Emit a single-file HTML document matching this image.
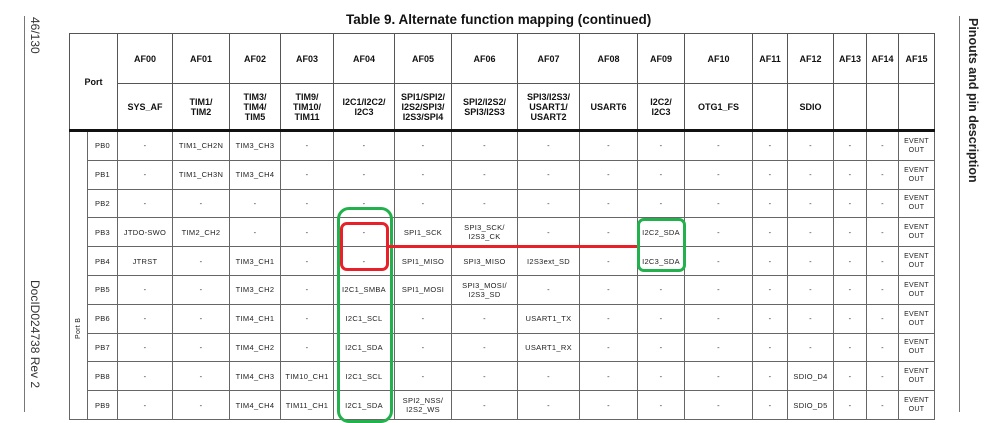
<!DOCTYPE html>
<html><head><meta charset="utf-8"><style>
body{margin:0;width:998px;height:412px;background:#fff;overflow:hidden;position:relative;font-family:"Liberation Sans",Arial,sans-serif;}
.a{position:absolute}
table{position:absolute;left:69px;top:33px;border-collapse:collapse;table-layout:fixed;}
td{border:1px solid #666;text-align:center;vertical-align:middle;padding:0;font-size:7.5px;color:#222;letter-spacing:0.3px;line-height:9px;overflow:hidden;white-space:nowrap}
th{border:1px solid #555;font-size:9px;font-weight:bold;color:#111;line-height:10px;padding:0;white-space:nowrap}
tr.h1 th{height:49px}
tr.h2 th{height:45px;border-bottom:3px solid #111}
tr.r td{height:27.8px}
.e{font-size:7px;line-height:9px}
</style></head><body>
<div class="a" style="left:24px;top:16px;width:1px;height:396px;background:#777"></div>
<div class="a" style="left:959px;top:16px;width:1px;height:396px;background:#777"></div>
<div class="a" style="left:42px;top:17px;transform-origin:0 0;transform:rotate(90deg);font-size:12px;color:#333;white-space:nowrap">46/130</div>
<div class="a" style="left:42px;top:280px;transform-origin:0 0;transform:rotate(90deg);font-size:12px;color:#333;white-space:nowrap">DocID024738 Rev 2</div>
<div class="a" style="left:980px;top:18px;transform-origin:0 0;transform:rotate(90deg);font-size:12.5px;font-weight:bold;color:#222;white-space:nowrap">Pinouts and pin description</div>
<div class="a" style="left:346px;top:12px;font-size:13.5px;font-weight:bold;color:#111;white-space:nowrap">Table 9. Alternate function mapping (continued)</div>
<table>
<colgroup><col style="width:18px"><col style="width:30px"><col style="width:55px"><col style="width:57px"><col style="width:51px"><col style="width:53px"><col style="width:61px"><col style="width:57px"><col style="width:66px"><col style="width:62px"><col style="width:58px"><col style="width:47px"><col style="width:68px"><col style="width:35px"><col style="width:46px"><col style="width:33px"><col style="width:32px"><col style="width:36px"></colgroup>
<tr class="h1"><th colspan="2" rowspan="2" style="border-bottom:3px solid #111">Port</th><th>AF00</th><th>AF01</th><th>AF02</th><th>AF03</th><th>AF04</th><th>AF05</th><th>AF06</th><th>AF07</th><th>AF08</th><th>AF09</th><th>AF10</th><th>AF11</th><th>AF12</th><th>AF13</th><th>AF14</th><th>AF15</th></tr>
<tr class="h2"><th>SYS_AF</th><th>TIM1/<br>TIM2</th><th>TIM3/<br>TIM4/<br>TIM5</th><th>TIM9/<br>TIM10/<br>TIM11</th><th>I2C1/I2C2/<br>I2C3</th><th>SPI1/SPI2/<br>I2S2/SPI3/<br>I2S3/SPI4</th><th>SPI2/I2S2/<br>SPI3/I2S3</th><th>SPI3/I2S3/<br>USART1/<br>USART2</th><th>USART6</th><th>I2C2/<br>I2C3</th><th>OTG1_FS</th><th></th><th>SDIO</th><th></th><th></th><th></th></tr>
<tr class="r"><td rowspan="10" style="position:relative"><div style="position:absolute;left:4px;top:207px;transform-origin:0 0;transform:rotate(-90deg);font-size:7px;white-space:nowrap">Port B</div></td><td>PB0</td><td>-</td><td>TIM1_CH2N</td><td>TIM3_CH3</td><td>-</td><td>-</td><td>-</td><td>-</td><td>-</td><td>-</td><td>-</td><td>-</td><td>-</td><td>-</td><td>-</td><td>-</td><td class="e">EVENT<br>OUT</td></tr>
<tr class="r"><td>PB1</td><td>-</td><td>TIM1_CH3N</td><td>TIM3_CH4</td><td>-</td><td>-</td><td>-</td><td>-</td><td>-</td><td>-</td><td>-</td><td>-</td><td>-</td><td>-</td><td>-</td><td>-</td><td class="e">EVENT<br>OUT</td></tr>
<tr class="r"><td>PB2</td><td>-</td><td>-</td><td>-</td><td>-</td><td>-</td><td>-</td><td>-</td><td>-</td><td>-</td><td>-</td><td>-</td><td>-</td><td>-</td><td>-</td><td>-</td><td class="e">EVENT<br>OUT</td></tr>
<tr class="r"><td>PB3</td><td>JTDO-SWO</td><td>TIM2_CH2</td><td>-</td><td>-</td><td>-</td><td>SPI1_SCK</td><td>SPI3_SCK/<br>I2S3_CK</td><td>-</td><td>-</td><td>I2C2_SDA</td><td>-</td><td>-</td><td>-</td><td>-</td><td>-</td><td class="e">EVENT<br>OUT</td></tr>
<tr class="r"><td>PB4</td><td>JTRST</td><td>-</td><td>TIM3_CH1</td><td>-</td><td>-</td><td>SPI1_MISO</td><td>SPI3_MISO</td><td>I2S3ext_SD</td><td>-</td><td>I2C3_SDA</td><td>-</td><td>-</td><td>-</td><td>-</td><td>-</td><td class="e">EVENT<br>OUT</td></tr>
<tr class="r"><td>PB5</td><td>-</td><td>-</td><td>TIM3_CH2</td><td>-</td><td>I2C1_SMBA</td><td>SPI1_MOSI</td><td>SPI3_MOSI/<br>I2S3_SD</td><td>-</td><td>-</td><td>-</td><td>-</td><td>-</td><td>-</td><td>-</td><td>-</td><td class="e">EVENT<br>OUT</td></tr>
<tr class="r"><td>PB6</td><td>-</td><td>-</td><td>TIM4_CH1</td><td>-</td><td>I2C1_SCL</td><td>-</td><td>-</td><td>USART1_TX</td><td>-</td><td>-</td><td>-</td><td>-</td><td>-</td><td>-</td><td>-</td><td class="e">EVENT<br>OUT</td></tr>
<tr class="r"><td>PB7</td><td>-</td><td>-</td><td>TIM4_CH2</td><td>-</td><td>I2C1_SDA</td><td>-</td><td>-</td><td>USART1_RX</td><td>-</td><td>-</td><td>-</td><td>-</td><td>-</td><td>-</td><td>-</td><td class="e">EVENT<br>OUT</td></tr>
<tr class="r"><td>PB8</td><td>-</td><td>-</td><td>TIM4_CH3</td><td>TIM10_CH1</td><td>I2C1_SCL</td><td>-</td><td>-</td><td>-</td><td>-</td><td>-</td><td>-</td><td>-</td><td>SDIO_D4</td><td>-</td><td>-</td><td class="e">EVENT<br>OUT</td></tr>
<tr class="r"><td>PB9</td><td>-</td><td>-</td><td>TIM4_CH4</td><td>TIM11_CH1</td><td>I2C1_SDA</td><td>SPI2_NSS/<br>I2S2_WS</td><td>-</td><td>-</td><td>-</td><td>-</td><td>-</td><td>-</td><td>SDIO_D5</td><td>-</td><td>-</td><td class="e">EVENT<br>OUT</td></tr>
</table>
<div class="a" style="left:337px;top:207px;width:50px;height:210px;border:3px solid #22b14c;border-radius:12px"></div>
<div class="a" style="left:340px;top:222px;width:43px;height:43px;border:3px solid #e8202a;border-radius:7px"></div>
<div class="a" style="left:388px;top:245px;width:251px;height:3px;background:#e8202a"></div>
<div class="a" style="left:637px;top:218px;width:43px;height:48px;border:3px solid #22b14c;border-radius:7px"></div>
</body></html>
